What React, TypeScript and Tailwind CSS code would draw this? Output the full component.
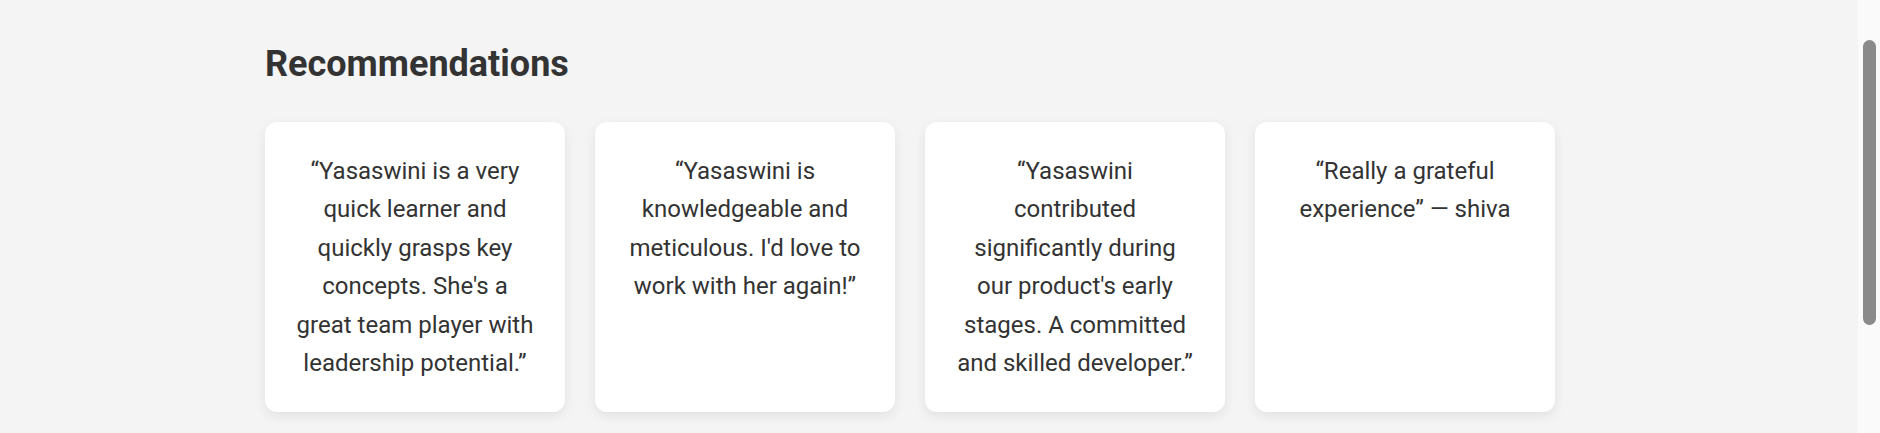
import React from "react";

const recs = [
  "“Yasaswini is a very quick learner and quickly grasps key concepts. She's a great team player with leadership potential.”",
  "“Yasaswini is knowledgeable and meticulous. I'd love to work with her again!”",
  "“Yasaswini contributed significantly during our product's early stages. A committed and skilled developer.”",
  "“Really a grateful experience” — shiva",
];

export default function App() {
  return (
    <div className="flex h-[433px] w-full overflow-hidden bg-[#f4f4f4] font-['Roboto',sans-serif] text-[#333333]">
      <main className="flex-1 pl-[265px] pt-[42px]">
        <h2 className="text-[36px] font-bold leading-[44px] text-[#333333]">Recommendations</h2>
        <div className="mt-[36px] flex items-start gap-[30px]">
          {recs.map((t, i) => (
            <div
              key={i}
              className="h-[290px] w-[300px] rounded-[12px] bg-white px-[30px] pt-[30px] text-center text-[24px] leading-[38.4px] shadow-[0_4px_12px_rgba(0,0,0,0.08)]"
            >
              {t}
            </div>
          ))}
        </div>
      </main>
      <div className="flex w-[22px] shrink-0 justify-center bg-[#fafafa] pt-[40px]">
        <div className="h-[285px] w-[13px] rounded-full bg-[#8a8a8a]" />
      </div>
    </div>
  );
}
